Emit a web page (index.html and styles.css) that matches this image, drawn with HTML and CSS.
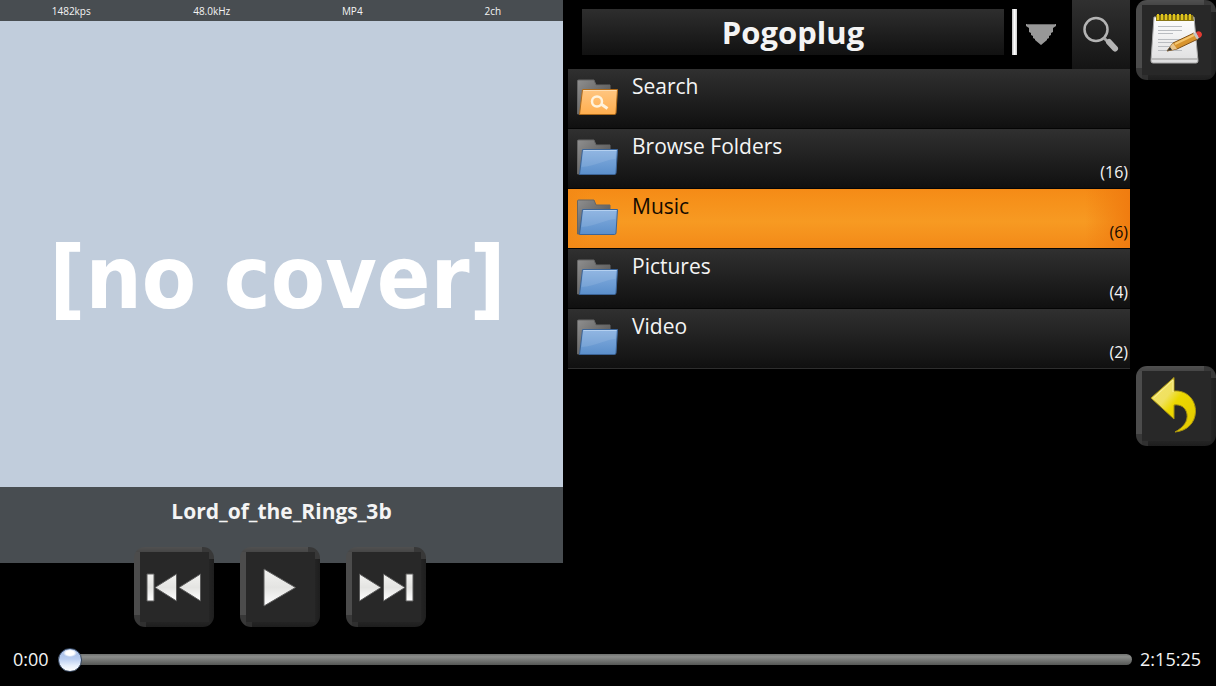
FILE: index.html
```html
<!DOCTYPE html>
<html lang="en">
<head>
<meta charset="utf-8">
<title>Pogoplug</title>
<link rel="stylesheet" href="styles.css">
</head>
<body>
<svg class="defs" aria-hidden="true">
  <defs>
    <linearGradient id="back-grey" x1="0" y1="0" x2="1" y2="1"><stop offset="0" stop-color="#8f8f8f"/><stop offset="1" stop-color="#484848"/></linearGradient>
    <linearGradient id="blue" x1="0" y1="0" x2="0" y2="1"><stop offset="0" stop-color="#86afe0"/><stop offset="1" stop-color="#5b8fcb"/></linearGradient>
    <linearGradient id="amber" x1="0" y1="0" x2="0" y2="1"><stop offset="0" stop-color="#ffc681"/><stop offset="1" stop-color="#ffae4e"/></linearGradient>
    <linearGradient id="white" x1="0" y1="0" x2="0" y2="1"><stop offset="0" stop-color="#f2f2f0"/><stop offset=".5" stop-color="#e4e4e2"/><stop offset="1" stop-color="#fff"/></linearGradient>
    <linearGradient id="yellow" x1="0" y1="0" x2="1" y2="1"><stop offset="0" stop-color="#f3e36a"/><stop offset=".35" stop-color="#f0e160"/><stop offset=".5" stop-color="#ecd800"/><stop offset="1" stop-color="#e3c700"/></linearGradient>
    <linearGradient id="paper" x1="0" y1="0" x2="0" y2="1"><stop offset="0" stop-color="#fff"/><stop offset="1" stop-color="#dededf"/></linearGradient>
    <g id="folder-back"><path d="M1.500 35V2Q1.500 1 2.500 1H18L20 6H34V35Z" fill="url(#back-grey)" stroke="#666"/></g>
    <g id="folder">
      <use href="#folder-back"/>
      <path d="M6.500 10.500H41.500L40 34Q39.800 35.500 38.500 35.500H3.500Z" fill="url(#blue)" stroke="#3c6496"/>
      <path d="M7.500 11.500H40.500" stroke="#b4d0f0"/>
      <path d="M7 12H40L39.500 20C28 21 20 27 5.500 28Z" fill="#fff" opacity=".1"/>
    </g>
  </defs>
</svg>
<div class="app">
  <main class="panes">
    <section class="player">
      <div class="stage">
        <div class="stats"><span>1482kps</span><span>48.0kHz</span><span>MP4</span><span>2ch</span></div>
        <div class="cover">[no cover]</div>
        <div class="track">Lord_of_the_Rings_3b</div>
      </div>
      <div class="controls">
        <button class="key" aria-label="Previous">
          <svg width="80" height="80" viewBox="0 0 80 80"><g fill="url(#white)" stroke="#5c5c5c"><path d="M13 27H20V54H13ZM21 40.500L42.500 27V54ZM45 40.500L66.500 27V54Z"/></g></svg>
        </button>
        <button class="key" aria-label="Play">
          <svg width="80" height="80" viewBox="0 0 80 80"><path d="M24 22L55.500 40.500L24 59Z" fill="url(#white)" stroke="#5c5c5c"/></svg>
        </button>
        <button class="key" aria-label="Next">
          <svg width="80" height="80" viewBox="0 0 80 80"><g fill="url(#white)" stroke="#5c5c5c"><path d="M60 27H67V54H60ZM59 40.500L37.500 27V54ZM35 40.500L13.500 27V54Z"/></g></svg>
        </button>
      </div>
    </section>

    <section class="browser">
      <header class="bar">
        <h1 class="title">Pogoplug</h1>
        <span class="divider"></span>
        <button class="drop" aria-label="Choose source">
          <svg width="30" height="22" viewBox="0 0 30 22"><path d="M0 0H30V2L27 4V8L25 9V11L23 12V14L21 15V16L15 21L9 16V15L7 14V12L5 11V9L3 8V4L0 2Z" fill="#989898"/><path d="M1 .500H29" stroke="#6c6c6c"/></svg>
        </button>
        <button class="find" aria-label="Search">
          <svg width="58" height="69" viewBox="0 0 58 69" fill="none"><circle cx="24" cy="29.500" r="11.500" stroke="#b4b4b4" stroke-width="2.500"/><path d="M32 38L36 42" stroke="#a8a8a8" stroke-width="3"/><path d="M37 42L43 48.500" stroke="#b4b4b4" stroke-width="6" stroke-linecap="round"/></svg>
        </button>
      </header>
      <ul class="list">
        <li><button class="row">
          <svg class="icon" width="42" height="38" viewBox="0 0 42 38"><use href="#folder-back"/><path d="M6.500 10.500H41.500L40 34Q39.800 35.500 38.500 35.500H3.500Z" fill="url(#amber)" stroke="#ad6a1b"/><path d="M7.500 11.500H40.500" stroke="#ffddb0"/><circle cx="21" cy="22.500" r="5" fill="none" stroke="#fff3dc" stroke-width="2.500"/><path d="M25 25L31.500 29.500" stroke="#fff3dc" stroke-width="3"/></svg>
          <span class="name">Search</span></button></li>
        <li><button class="row"><svg class="icon" width="42" height="38" viewBox="0 0 42 38"><use href="#folder"/></svg><span class="name">Browse Folders</span><span class="count">(16)</span></button></li>
        <li><button class="row selected"><svg class="icon" width="42" height="38" viewBox="0 0 42 38"><use href="#folder"/></svg><span class="name">Music</span><span class="count">(6)</span></button></li>
        <li><button class="row"><svg class="icon" width="42" height="38" viewBox="0 0 42 38"><use href="#folder"/></svg><span class="name">Pictures</span><span class="count">(4)</span></button></li>
        <li><button class="row"><svg class="icon" width="42" height="38" viewBox="0 0 42 38"><use href="#folder"/></svg><span class="name">Video</span><span class="count">(2)</span></button></li>
      </ul>
    </section>

    <nav class="side">
      <button class="key" aria-label="Playlist">
        <svg width="80" height="80" viewBox="0 0 80 80">
          <path d="M18 17H58L62 61Q62 63 60 63H17Q15 63 15 61Z" fill="url(#paper)" stroke="#aaa"/>
          <path d="M16 59H61" stroke="#bbb" stroke-width="2"/>
          <path d="M22 26.500H46M22 30.500H46M22 33.500H37M22 39.500H46M22 42.500H46M22 46.500H42M22 50.500H46" stroke="#b9bcc0"/>
          <path d="M20 15H57L58 21H20Z" fill="#8a7716"/>
          <path d="M22 14V20M26 14V20M30 14V20M34 14V20M38 14V20M42 14V20M46 14V20M50 14V20M54 14V20" stroke="#e0c51c" stroke-width="2"/>
          <path d="M31 51L37 43L58 33L62 39L41 49Z" fill="#d8942e" stroke="#80511a"/>
          <path d="M37 43L41 49L31 51Z" fill="#e8c48b"/><path d="M31 51L34 47L36 50Z" fill="#333"/>
          <path d="M39 44L58 35" stroke="#f3c46d" stroke-width="2"/>
          <path d="M57 33.500L60 32L63.500 37.500L61 39.500Z" fill="#c5c5c5"/>
          <path d="M60 32Q65 30 66 34Q66 37 63 38Z" fill="#e33b32"/>
        </svg>
      </button>
      <button class="key" aria-label="Back">
        <svg width="80" height="80" viewBox="0 0 80 80"><path d="M15 32L38 11.500V25C51 24 60 34 59.500 46C59 57 51 65 39 66C48 61 52 55 51 48C50 42 45 38 38 39V53Z" fill="url(#yellow)" stroke="#a89310"/><path d="M17.500 32L37 14V26" fill="none" stroke="#faf09a"/></svg>
      </button>
    </nav>
  </main>

  <footer class="seek">
    <label for="position">0:00</label>
    <input id="position" class="slider" type="range" min="0" max="8125" value="0">
    <span>2:15:25</span>
  </footer>
</div>
</body>
</html>
```
FILE: styles.css
```css
* { box-sizing: border-box; }
body { margin: 0; background: #000; color: #f4f4f4; font-family: "Open Sans", "Noto Sans", sans-serif; }
button { border: 0; padding: 0; background: none; color: inherit; font: inherit; }
svg { display: block; }
.defs { position: absolute; width: 0; height: 0; }

.app { display: flex; flex-direction: column; min-height: 100vh; }
.panes { flex: 1; display: grid; grid-template-columns: minmax(0, 1fr) minmax(0, 1fr) 80px; column-gap: 5px; align-items: start; }
.browser { margin-right: 1px; }

.stage { display: flex; flex-direction: column; aspect-ratio: 1; background: #484d51; }
.stats { display: grid; grid-template-columns: repeat(4, 1fr); height: 21px; padding-left: 1px; font-size: 10px; line-height: 22px; text-align: center; }
.cover { flex: 1; display: flex; align-items: center; justify-content: center; background: #c1cddc; color: #fff; font-family: "DejaVu Sans Condensed", "DejaVu Sans", sans-serif; font-weight: 700; font-size: 88px; line-height: 100px; white-space: nowrap; padding: 48px 8px 0 0; }
.track { height: 76px; padding-top: 10px; font-size: 21px; line-height: 28px; font-weight: 700; text-align: center; }

.controls { display: flex; justify-content: center; gap: 26px; margin-top: -16px; padding-right: 4px; }
.key {
  width: 80px; height: 80px; border-radius: 11px; overflow: hidden;
  background:
    linear-gradient(#505050, #464646) 0 0 / 68px 5px no-repeat,
    linear-gradient(#4c4c4c, #4c4c4c) 0 0 / 6px 68px no-repeat,
    linear-gradient(#383838, #383838) 100% 0 / 12px 5px no-repeat,
    linear-gradient(#383838, #383838) 100% 0 / 5px 12px no-repeat,
    linear-gradient(#383838, #383838) 0 100% / 6px 12px no-repeat,
    linear-gradient(#303030, #303030) 0 100% / 12px 5px no-repeat,
    linear-gradient(90deg, #242424, #1e1e1e) 100% 0 / 5px 100% no-repeat,
    linear-gradient(#242424, #1e1e1e) 0 100% / 100% 5px no-repeat,
    #282828;
}

.bar { display: flex; height: 69px; padding-left: 14px; }
.title { flex: 1; height: 46px; margin: 9px 0 0; background: linear-gradient(#2e2e2e, #111); font-size: 31px; line-height: 46px; font-weight: 700; text-align: center; }
.divider { width: 5px; height: 46px; margin: 9px 9px 0 8px; background: linear-gradient(90deg, #bbb, #fff, #ccc); }
.drop { align-self: flex-start; padding-top: 24px; margin-right: 16px; }
.find { width: 58px; background: linear-gradient(#303030, #141414); }

.list { list-style: none; margin: 0; padding: 0; }
.row { display: flex; width: 100%; height: 60px; padding: 0 2px 0 8px; background: linear-gradient(#303030, #101010); border-bottom: 1px solid #050505; text-align: left; }
li:last-child .row { border-bottom-color: #2e2e2e; }
.icon { margin: 10px 14px 0 0; flex: none; }
.name { flex: 1; padding-top: 3px; font-size: 21px; line-height: 28px; }
.count { align-self: flex-end; font-size: 16px; line-height: 20px; padding-bottom: 6px; }
.selected { color: #140a00; background: linear-gradient(90deg, #f38a16, transparent 4%, transparent 92%, #f07c10), linear-gradient(#f58b16, #f79a22 55%, #f38a18); }

.side { display: flex; flex-direction: column; gap: 286px; }

.seek { display: flex; align-items: center; height: 54px; padding: 0 15px 0 13px; font-size: 18px; line-height: 24px; }
.slider { flex: 1; min-width: 0; height: 24px; margin: 0 8px 0 9px; appearance: none; background: none; }
.slider::-webkit-slider-runnable-track { height: 11px; border-radius: 6px; background: linear-gradient(#6f716f, #8b8d8b 25%, #555755); }
.slider::-webkit-slider-thumb { appearance: none; width: 24px; height: 24px; margin-top: -6px; border: 1px solid #32445e; border-radius: 50%; background: radial-gradient(7px 4px at 50% 4px, #fff 60%, transparent), linear-gradient(#a3bae2, #b9cdf0 45%, #e6effc 75%, #fff); }
```
